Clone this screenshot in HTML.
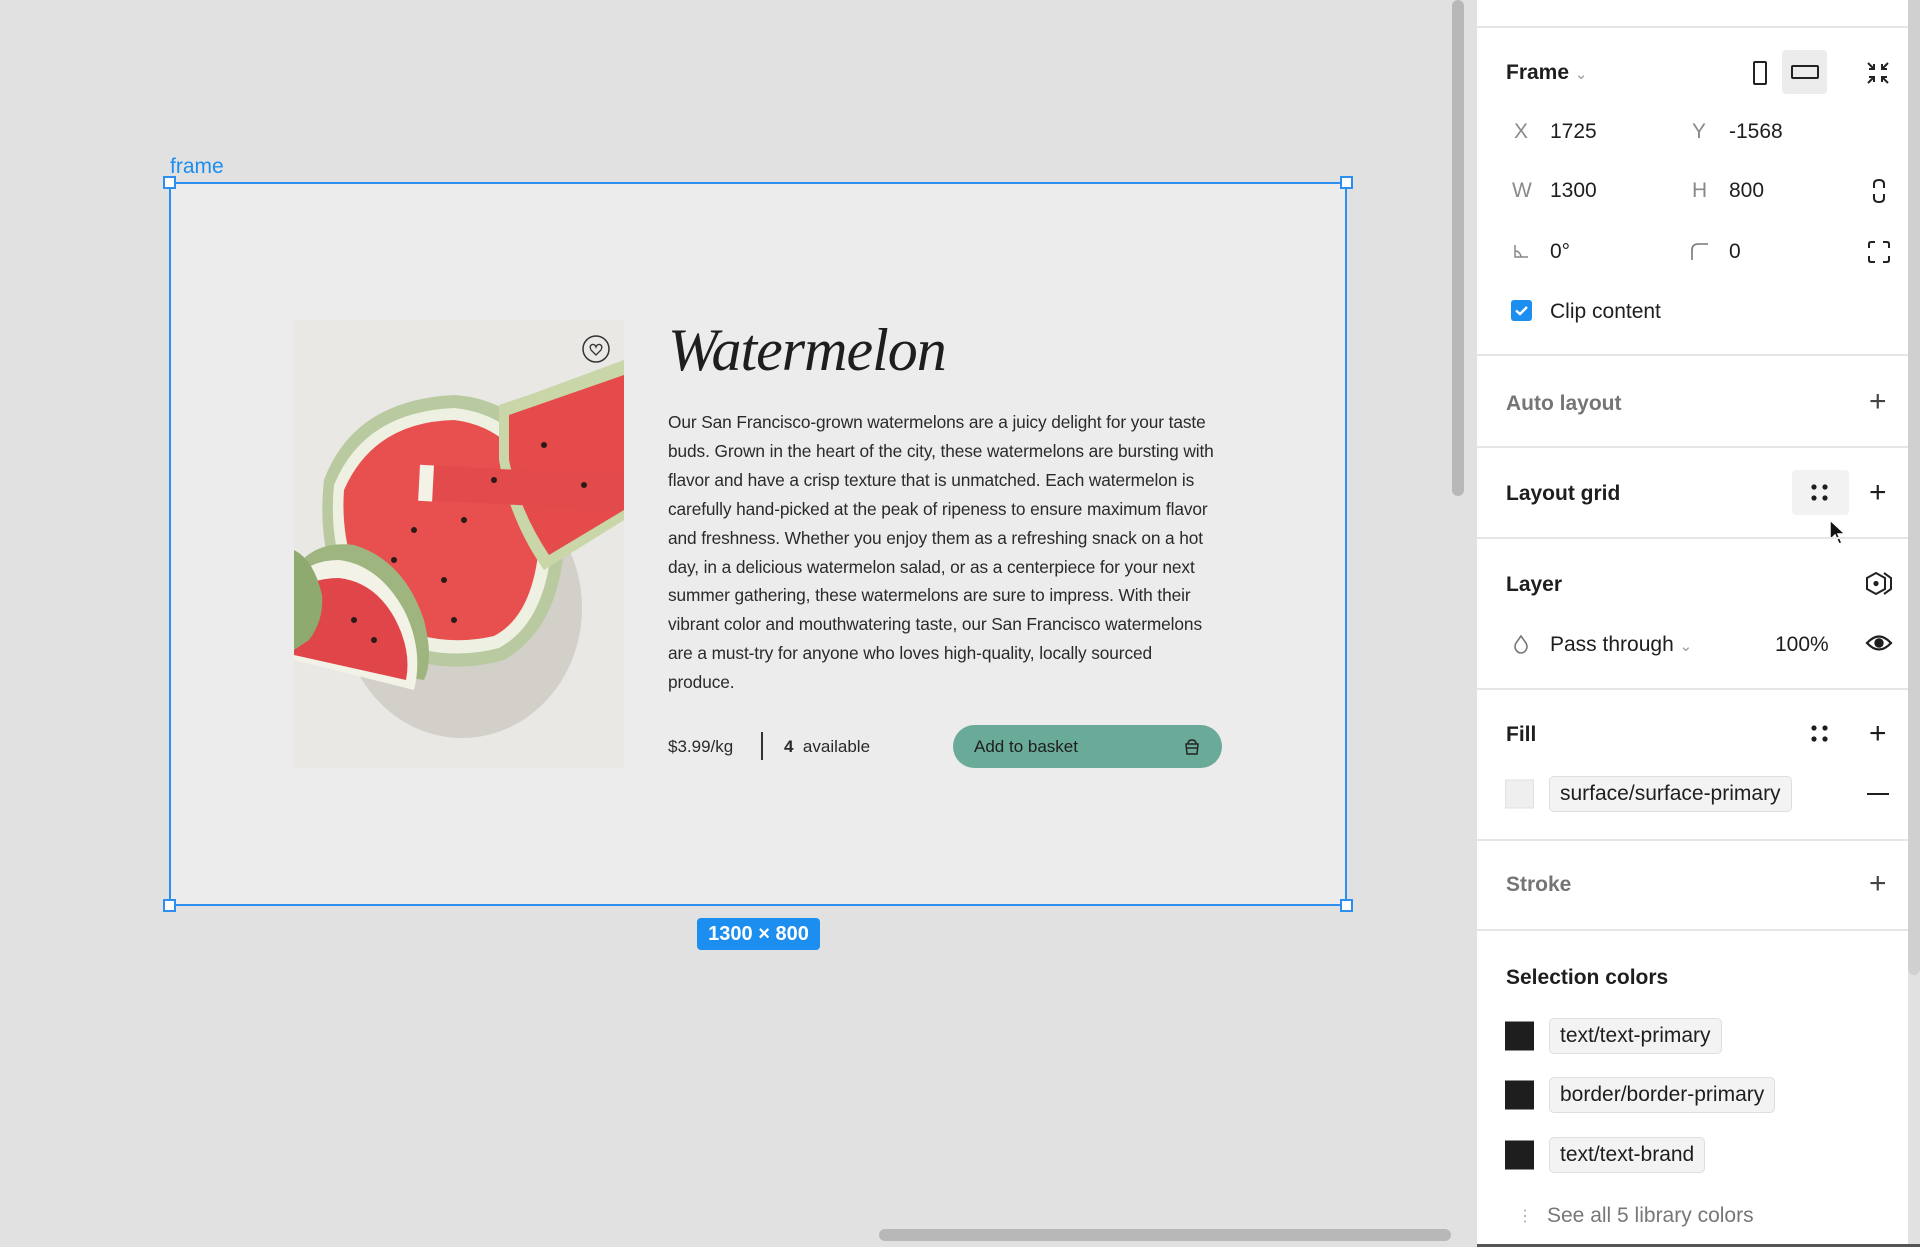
<!DOCTYPE html>
<html><head><meta charset="utf-8"><style>
*{margin:0;padding:0;box-sizing:border-box}
body{width:1920px;height:1247px;position:relative;overflow:hidden;background:#e1e1e1;font-family:"Liberation Sans",sans-serif;color:#1e1e1e}
.a{position:absolute}
.pl{position:absolute;left:1477px;top:0;width:431px;height:1247px;background:#fff}
.hr{position:absolute;left:0;width:431px;height:2px;background:#e6e6e6}
.h{position:absolute;left:29px;font-size:21px;font-weight:bold;transform:translateY(-45%)}
.t{position:absolute;font-size:21px;transform:translateY(-45%);white-space:nowrap}
.g{color:#8a8a8a}
.chip{position:absolute;left:72px;height:36px;border:1px solid #dedede;background:#f3f3f3;border-radius:5px;font-size:21px;line-height:34px;padding:0 10px;transform:translateY(-50%)}
.sw{position:absolute;left:28px;width:29px;height:29px;transform:translateY(-50%)}
p.l{white-space:nowrap}
</style></head><body>
<!-- canvas -->
<div class="a" style="left:1452px;top:0;width:12px;height:496px;background:#b8b8b8;border-radius:6px"></div>
<div class="a" style="left:879px;top:1229px;width:572px;height:12px;background:#b8b8b8;border-radius:6px"></div>
<div class="a" style="left:170px;top:155px;color:#1b8ef0;font-size:21px">frame</div>
<div class="a" style="left:169px;top:182px;width:1178px;height:724px;background:#ececec;border:2px solid #2b8ef0"></div>
<div class="a" style="left:163px;top:176px;width:13px;height:13px;background:#fff;border:2px solid #2b8ef0"></div>
<div class="a" style="left:1340px;top:176px;width:13px;height:13px;background:#fff;border:2px solid #2b8ef0"></div>
<div class="a" style="left:163px;top:899px;width:13px;height:13px;background:#fff;border:2px solid #2b8ef0"></div>
<div class="a" style="left:1340px;top:899px;width:13px;height:13px;background:#fff;border:2px solid #2b8ef0"></div>
<div class="a" style="left:697px;top:918px;width:123px;height:32px;background:#1b8ef0;color:#fff;border-radius:4px;font-size:20px;font-weight:bold;text-align:center;line-height:32px">1300 × 800</div>

<!-- image -->
<svg class="a" style="left:294px;top:320px" width="330" height="448" viewBox="0 0 330 448">
<rect width="330" height="448" fill="#e9e8e5"/>
<ellipse cx="150" cy="270" rx="120" ry="130" fill="#c9c6bf" opacity=".7" transform="translate(18,18)"/>
<path d="M30 160 Q60 80 160 75 Q240 80 270 170 Q280 300 210 340 Q140 360 70 320 Q20 250 30 160Z" fill="#b9c9a0"/>
<path d="M40 165 Q70 92 160 88 Q232 95 258 175 Q265 295 205 328 Q140 345 78 310 Q32 245 40 165Z" fill="#eef0e2"/>
<path d="M50 170 Q80 102 160 100 Q225 108 246 180 Q250 290 200 316 Q140 330 85 298 Q45 240 50 170Z" fill="#e8504f"/>
<path d="M205 85 L235 75 L330 40 L330 200 L250 250 Q215 200 205 140Z" fill="#c9d6a8"/>
<path d="M215 95 L330 55 L330 190 L255 235 Q225 190 215 140Z" fill="#e44b4a"/>
<rect x="130" y="145" width="200" height="35" fill="#e24a4b" transform="rotate(3 130 145)"/>
<rect x="126" y="145" width="14" height="36" fill="#f2f2e6" transform="rotate(3 130 145)"/>
<path d="M0 250 Q20 220 60 225 Q110 240 130 300 Q140 340 130 360 L0 340Z" fill="#9fb57f"/>
<path d="M0 340 L120 370 Q130 330 110 290 Q85 245 45 240 Q15 240 0 260Z" fill="#f3f2e6"/>
<path d="M0 335 L112 360 Q118 330 100 297 Q80 262 45 258 Q15 258 0 275Z" fill="#e0454a"/>
<path d="M0 230 Q20 240 28 275 Q30 300 15 320 L0 330Z" fill="#8eaa6f"/>
<g fill="#2a1b17"><circle cx="120" cy="210" r="3"/><circle cx="100" cy="240" r="3"/><circle cx="150" cy="260" r="3"/><circle cx="170" cy="200" r="3"/><circle cx="60" cy="300" r="3"/><circle cx="80" cy="320" r="3"/><circle cx="160" cy="300" r="3"/><circle cx="250" cy="125" r="3"/><circle cx="290" cy="165" r="3"/><circle cx="200" cy="160" r="3"/></g>
<circle cx="302" cy="29" r="13" fill="none" stroke="#333" stroke-width="1.5"/>
<path d="M302 35 L297 30 Q295 26 298 24.5 Q301 24 302 27 Q303 24 306 24.5 Q309 26 307 30Z" fill="none" stroke="#333" stroke-width="1.3"/>
</svg>
<div class="a" style="left:668px;top:316px;font-family:'Liberation Serif',serif;font-style:italic;font-size:60px;color:#1e1e1e;letter-spacing:-1px">Watermelon</div>
<div class="a" style="left:668px;top:408px;font-size:17.3px;line-height:28.9px;color:#2a2a2a;letter-spacing:-.1px">
<p class="l">Our San Francisco-grown watermelons are a juicy delight for your taste</p>
<p class="l">buds. Grown in the heart of the city, these watermelons are bursting with</p>
<p class="l">flavor and have a crisp texture that is unmatched. Each watermelon is</p>
<p class="l">carefully hand-picked at the peak of ripeness to ensure maximum flavor</p>
<p class="l">and freshness. Whether you enjoy them as a refreshing snack on a hot</p>
<p class="l">day, in a delicious watermelon salad, or as a centerpiece for your next</p>
<p class="l">summer gathering, these watermelons are sure to impress. With their</p>
<p class="l">vibrant color and mouthwatering taste, our San Francisco watermelons</p>
<p class="l">are a must-try for anyone who loves high-quality, locally sourced</p>
<p class="l">produce.</p></div>
<div class="a" style="left:668px;top:737px;font-size:17px;color:#2a2a2a">$3.99/kg</div>
<div class="a" style="left:761px;top:732px;width:2px;height:28px;background:#333"></div>
<div class="a" style="left:784px;top:737px;font-size:17px;color:#2a2a2a"><b>4</b>&nbsp; available</div>
<div class="a" style="left:953px;top:725px;width:269px;height:43px;background:#6aaa98;border-radius:22px;font-size:17px;line-height:43px;padding-left:21px;color:#1e1e1e">Add to basket
<svg class="a" style="left:230px;top:13px" width="18" height="18" viewBox="0 0 18 18" fill="none" stroke="#222" stroke-width="1.4"><path d="M5 6 Q5 2 9 2 Q13 2 13 6"/><path d="M3 6H15L14 16H4Z"/><path d="M3.5 10H14.5"/></svg></div>

<!-- panel -->
<div class="a" style="left:1908px;top:0;width:12px;height:1247px;background:#e1e1e1"></div>
<div class="a" style="left:1908px;top:0;width:12px;height:975px;background:#d0d0d0;border-radius:0 0 6px 6px"></div>
<div class="pl">
<div class="hr" style="top:26px"></div>
<div class="h" style="top:72px">Frame <span style="font-weight:normal;color:#999;font-size:15px">&#8964;</span></div>
<div class="a" style="left:276px;top:61px;width:14px;height:24px;border:2px solid #222;border-radius:2px"></div>
<div class="a" style="left:305px;top:50px;width:45px;height:44px;background:#ececec;border-radius:4px"></div>
<div class="a" style="left:314px;top:65px;width:28px;height:14px;border:2px solid #222;border-radius:2px"></div>
<svg class="a" style="left:389px;top:61px" width="24" height="24" viewBox="0 0 24 24" fill="none" stroke="#222" stroke-width="2"><path d="M2 2L8 8M8 3V8H3M22 2L16 8M16 3V8H21M2 22L8 16M3 16H8V21M22 22L16 16M21 16H16V21"/></svg>
<div class="t g" style="left:37px;top:131px">X</div><div class="t" style="left:73px;top:131px">1725</div>
<div class="t g" style="left:215px;top:131px">Y</div><div class="t" style="left:252px;top:131px">-1568</div>
<div class="t g" style="left:35px;top:190px">W</div><div class="t" style="left:73px;top:190px">1300</div>
<div class="t g" style="left:215px;top:190px">H</div><div class="t" style="left:252px;top:190px">800</div>
<svg class="a" style="left:395px;top:178px" width="14" height="26" viewBox="0 0 14 26" fill="none" stroke="#222" stroke-width="2"><path d="M2 10V6Q2 2 7 2Q12 2 12 6V10M2 16V20Q2 24 7 24Q12 24 12 20V16"/></svg>
<svg class="a" style="left:36px;top:243px" width="16" height="16" viewBox="0 0 16 16" fill="none" stroke="#888" stroke-width="1.5"><path d="M2 2V14H15M2 8Q7 8 8 14"/></svg>
<div class="t" style="left:73px;top:251px">0°</div>
<svg class="a" style="left:213px;top:242px" width="18" height="18" viewBox="0 0 18 18" fill="none" stroke="#777" stroke-width="1.6"><path d="M2 18V8Q2 2 8 2H18"/></svg>
<div class="t" style="left:252px;top:251px">0</div>
<svg class="a" style="left:390px;top:240px" width="24" height="24" viewBox="0 0 24 24" fill="none" stroke="#222" stroke-width="2"><path d="M2 8V4Q2 2 4 2H8M16 2H20Q22 2 22 4V8M22 16V20Q22 22 20 22H16M8 22H4Q2 22 2 20V16"/></svg>
<div class="a" style="left:34px;top:300px;width:21px;height:21px;background:#1b8ef0;border-radius:3px"><svg width="21" height="21" viewBox="0 0 21 21"><path d="M5 10.5L9 14L16 7" fill="none" stroke="#fff" stroke-width="2.4"/></svg></div>
<div class="t" style="left:73px;top:311px">Clip content</div>
<div class="hr" style="top:354px"></div>
<div class="h g" style="top:403px;color:#757575">Auto layout</div>
<div class="a" style="left:392px;top:392px;font-size:30px;line-height:20px;color:#444">+</div>
<div class="hr" style="top:446px"></div>
<div class="h" style="top:493px">Layout grid</div>
<div class="a" style="left:315px;top:470px;width:57px;height:45px;background:#f2f2f2;border-radius:4px"></div>
<svg class="a" style="left:333px;top:483px" width="20" height="20"><g fill="#1e1e1e"><circle cx="4" cy="4" r="2.6"/><circle cx="15" cy="4" r="2.6"/><circle cx="4" cy="15" r="2.6"/><circle cx="15" cy="15" r="2.6"/></g></svg>
<div class="a" style="left:392px;top:483px;font-size:30px;line-height:20px">+</div>
<svg class="a" style="left:351px;top:518px" width="20" height="28" viewBox="0 0 20 28"><path d="M2 2V22L7 17L11 26L14 25L10 16H17Z" fill="#111" stroke="#fff" stroke-width="1.5"/></svg>
<div class="hr" style="top:537px"></div>
<div class="h" style="top:584px">Layer</div>
<svg class="a" style="left:388px;top:571px" width="28" height="26" viewBox="0 0 28 26" fill="none" stroke="#222" stroke-width="2"><path d="M11 2L20 7V18L11 23L2 18V7Z"/><circle cx="11" cy="12.5" r="1.6" fill="#222"/><path d="M19 2L26 7V18L19 23"/></svg>
<svg class="a" style="left:36px;top:634px" width="16" height="20" viewBox="0 0 16 20" fill="none" stroke="#777" stroke-width="1.6"><path d="M8 2L3 9Q1 13 3 16Q5 19 8 19Q11 19 13 16Q15 13 13 9Z"/></svg>
<div class="t" style="left:73px;top:644px">Pass through <span style="color:#999;font-size:15px">&#8964;</span></div>
<div class="t" style="left:298px;top:644px">100%</div>
<svg class="a" style="left:388px;top:633px" width="28" height="20" viewBox="0 0 28 20" fill="none" stroke="#1e1e1e" stroke-width="2.2"><path d="M2 10Q14 -3 26 10Q14 23 2 10Z"/><circle cx="14" cy="10" r="3.6" fill="#1e1e1e"/></svg>
<div class="hr" style="top:688px"></div>
<div class="h" style="top:734px">Fill</div>
<svg class="a" style="left:333px;top:724px" width="20" height="20"><g fill="#1e1e1e"><circle cx="4" cy="4" r="2.6"/><circle cx="15" cy="4" r="2.6"/><circle cx="4" cy="15" r="2.6"/><circle cx="15" cy="15" r="2.6"/></g></svg>
<div class="a" style="left:392px;top:724px;font-size:30px;line-height:20px">+</div>
<div class="sw" style="top:794px;background:#efefef;border:1px solid #e2e2e2"></div>
<div class="chip" style="top:794px">surface/surface-primary</div>
<div class="a" style="left:390px;top:793px;width:22px;height:2px;background:#1e1e1e"></div>
<div class="hr" style="top:839px"></div>
<div class="h" style="top:884px;color:#757575">Stroke</div>
<div class="a" style="left:392px;top:874px;font-size:30px;line-height:20px;color:#444">+</div>
<div class="hr" style="top:929px"></div>
<div class="h" style="top:977px">Selection colors</div>
<div class="sw" style="top:1036px;background:#1e1e1e"></div><div class="chip" style="top:1036px">text/text-primary</div>
<div class="sw" style="top:1095px;background:#1e1e1e"></div><div class="chip" style="top:1095px">border/border-primary</div>
<div class="sw" style="top:1155px;background:#1e1e1e"></div><div class="chip" style="top:1155px">text/text-brand</div>
<div class="t g" style="left:40px;top:1215px;font-size:16px;color:#aaa">&#8942;</div>
<div class="t" style="left:70px;top:1215px;color:#777">See all 5 library colors</div>
</div>
<div class="a" style="left:1477px;top:1244px;width:443px;height:3px;background:#555"></div>
</body></html>
